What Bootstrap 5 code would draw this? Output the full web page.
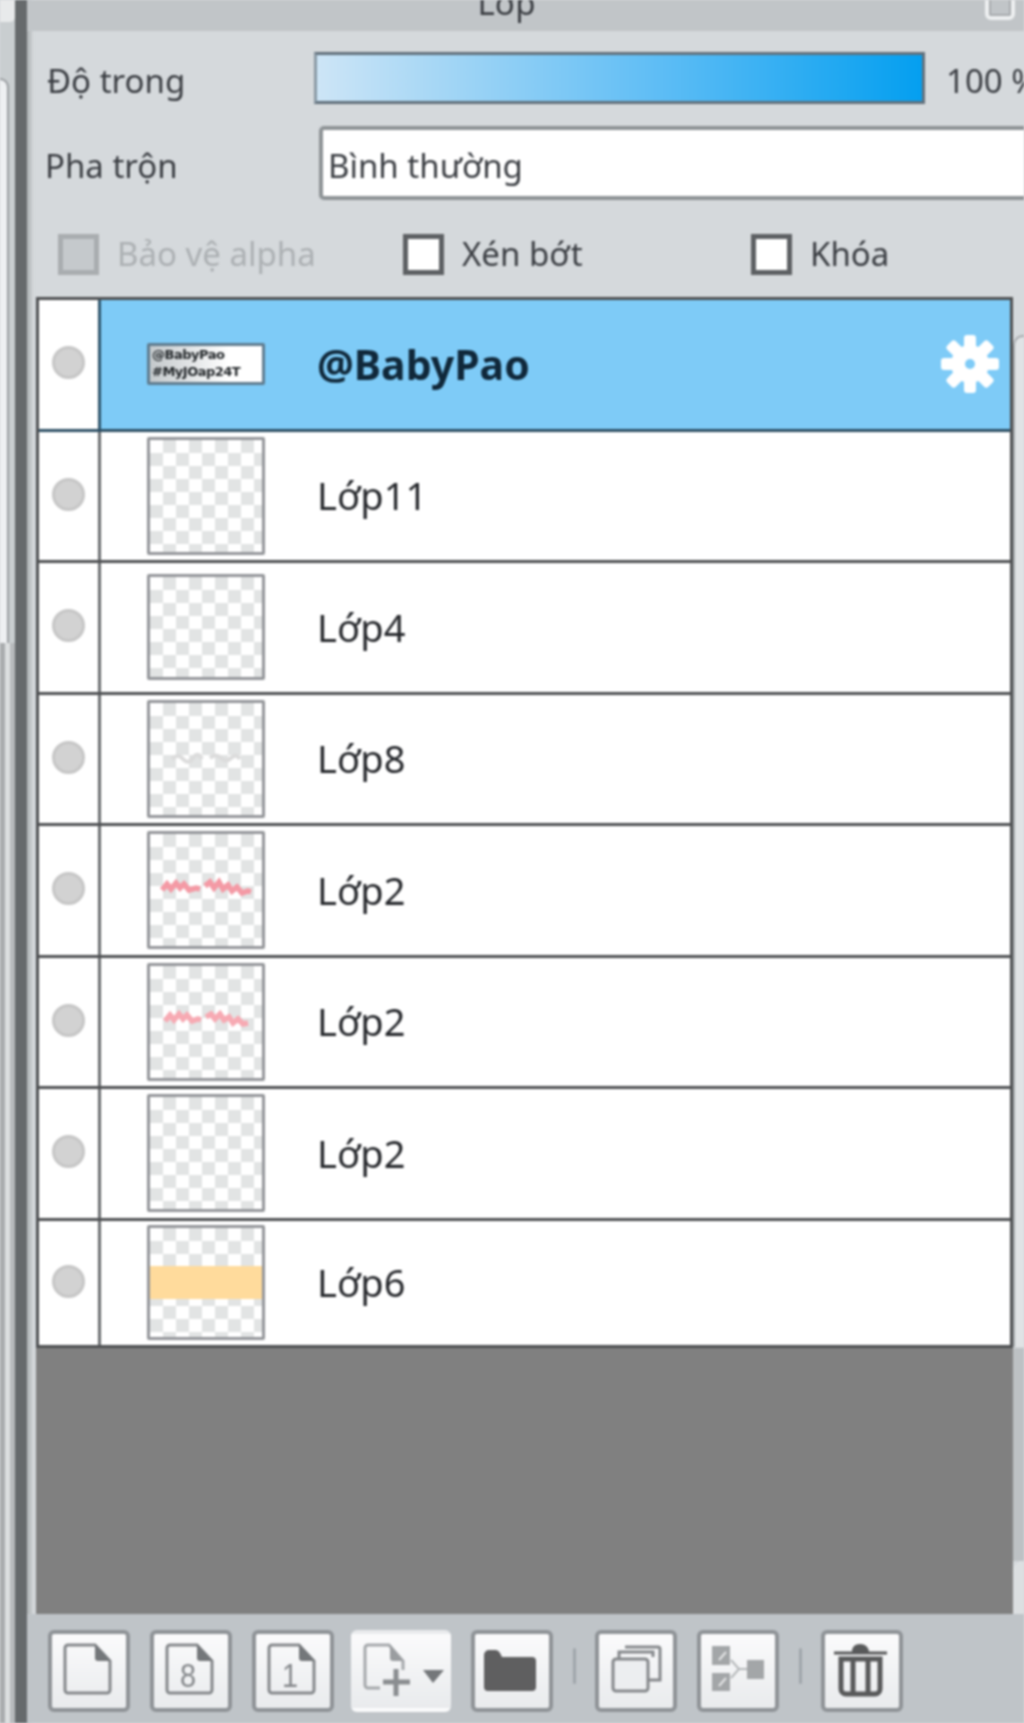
<!DOCTYPE html>
<html lang="vi">
<head>
    <meta charset="UTF-8">
    <meta name="viewport" content="width=device-width, initial-scale=1.0">
    <title>Lớp</title>
    <link rel="stylesheet" href="https://cdn.jsdelivr.net/npm/bootstrap@5.3.0/dist/css/bootstrap.min.css">
    <style>
        html, body { height: 1723px; overflow: hidden; }
        body { background: #d5d9dc; color: #3a3d42; font-family: "Noto Sans", sans-serif; font-size: 33px; }
        .app-frame { width: 1024px; height: 1723px; filter: blur(1px); }

        /* left rail */
        .rail { width: 15px; background: #c9ced0; }
        .rail-tab { height: 22px; background: #e8eaeb; border-bottom-right-radius: 5px; }
        .rail-panel { width: 9px; height: 565px; margin-top: 56px; background: #eef0f2; border-top: 2px solid #9a9ea1; border-right: 2px solid #9a9ea1; border-top-right-radius: 10px; }
        .rail-lower { background: repeating-linear-gradient(90deg, #a9acae 0 5px, #dcdfe0 5px 10px, #b7babc 10px 15px); }
        .split-bar { width: 12px; background: #666a6c; box-shadow: 4px 0 3px #b4b8ba; }

        /* panel header */
        .layer-panel { width: 997px; }
        .panel-title { height: 31px; background: #c1c5c8; line-height: 6px; padding-right: 38px; }
        .title-btn { position: absolute; right: 9px; top: -8px; width: 30px; height: 28px; border: 4px solid #eef0f1; outline: 2px solid #a7abae; outline-offset: -6px; border-radius: 6px; }

        .opacity-row { height: 52px; margin-top: 21px; padding-left: 20px; }
        .opacity-row label { width: 267px; padding-top: 5px; }
        .slider-track { width: 611px; height: 52px; border: 3px solid #62717c; border-left-color: #8a9aa5; background: linear-gradient(90deg, #cde5f6, #5bbcf5 58%, #049ff0); }
        .slider-val { margin-left: 21px; padding-top: 5px; }
        .blend-row { height: 74px; margin-top: 22px; padding-left: 18px; }
        .blend-row label { width: 274px; padding-top: 5px; }
        .blend-box { width: 720px; height: 74px; border: 4px solid #8e9396; border-radius: 5px; background: #fff; padding: 5px 0 0 5px; }
        .check-row { height: 42px; margin-top: 33px; margin-left: 31px; }
        .check-item { gap: 18px; }
        .check-item:nth-child(1) { width: 345px; }
        .check-item:nth-child(2) { width: 348px; }
        .check-box { width: 41px; height: 41px; border: 5px solid #5d6063; background: #fff; }
        .check-off { color: #acb0b3; }
        .check-off .check-box { background: #c5c9cc; border-color: #a9adb0; }

        /* layer list */
        .layer-list { width: 977px; margin-left: 9px; margin-top: 22px; border: 3px solid #4e5052; border-bottom: 0; background: #fff; }
        .layer-row { height: 131.5px; border-bottom: 3px solid #4e5052; }
        .layer-row:last-child { height: 127px; }
        .eye-cell { width: 62px; flex-shrink: 0; padding-bottom: 3px; border-right: 3px solid #6b6e70; }
        .eye-dot { width: 33px; height: 33px; border-radius: 50%; background: #d2d2d2; border: 3px solid #c6c6c6; }
        .layer-main { flex-grow: 1; min-width: 0; padding-left: 46px; }
        .layer-row.is-active .layer-main { background: #7ecbf7; }
        .layer-row.is-active .eye-cell { border-right-color: #2f566d; }
        .layer-row.is-active { border-bottom-color: #2d4f64; }
        .layer-thumb { width: 118px; height: 118px; flex-shrink: 0; border: 3px solid #94969a; border-radius: 2px; background: repeating-conic-gradient(#e2e4e4 0 25%, #fff 0 50%) 0 0 / 26px 26px; }
        .layer-row:nth-child(3) .layer-thumb { height: 106px; }
        .layer-row:last-child .layer-thumb { height: 115px; }
        .thumb-text { height: 42px; padding: 0 2px; background: linear-gradient(90deg, #c3c8cb, #fff 70%); font: 700 13px/17px "DejaVu Sans", sans-serif; letter-spacing: -.5px; color: #24282b; overflow: hidden; white-space: nowrap; border-color: #5f7c8f; }
        .layer-name { margin-left: 52px; font-size: 38px; color: #26282c; }
        .layer-row.is-active .layer-name { font-size: 41px; font-weight: 700; color: #10283a; }
        .gear-icon { margin-left: auto; margin-right: 11px; }
        .thumb-band { height: 33px; margin-top: 38px; background: #ffdb9c; }
        .empty-area { width: 977px; margin-left: 9px; height: 266px; background: #808080; }

        /* toolbar */
        .tool-bar { height: 112px; padding: 16px 0 0 21px; gap: 20px; background: #bfc4c8; }
        .tool-btn { width: 82px; height: 82px; padding: 0; border: 4px solid #8f9397; border-radius: 6px; background: linear-gradient(#fbfbfc, #e9ebed); }
        .tool-btn svg { display: block; margin: -4px; }
        .tool-off { width: 100px; margin-left: -3px; border-color: transparent; }
        .tool-sep { width: 3px; height: 36px; margin: 18px -1px 0 0; background: #a0a6ab; border-radius: 2px; }
        .side-slot { flex-grow: 1; }
        .side-curve { height: 1012px; margin-top: 60px; background: #e0e3e5; border-left: 2px solid #a5a9ac; border-top: 2px solid #a5a9ac; border-top-left-radius: 10px; }
        .side-lower { height: 213px; background: #bdc1c4; }
        .side-end { height: 53px; background: #dcdfe1; border-top-left-radius: 10px; }
    </style>
</head>
<body>
    <div class="app-frame d-flex">
        <div class="rail d-flex flex-column">
            <div class="rail-tab"></div>
            <div class="rail-panel"></div>
            <div class="rail-lower flex-grow-1"></div>
        </div>
        <div class="split-bar"></div>

        <div class="layer-panel overflow-hidden">
            <div class="panel-title position-relative text-center">Lớp<span class="title-btn"></span></div>

            <div class="opacity-row d-flex align-items-center text-nowrap">
                <label class="flex-shrink-0">Độ trong</label>
                <div class="slider-track flex-shrink-0"></div>
                <span class="slider-val">100 %</span>
            </div>
            <div class="blend-row d-flex align-items-center">
                <label class="flex-shrink-0">Pha trộn</label>
                <div class="blend-box d-flex align-items-center flex-shrink-0">Bình thường</div>
            </div>
            <div class="check-row d-flex">
                <div class="check-item check-off d-flex align-items-center"><span class="check-box"></span>Bảo vệ alpha</div>
                <div class="check-item d-flex align-items-center"><span class="check-box"></span>Xén bớt</div>
                <div class="check-item d-flex align-items-center"><span class="check-box"></span>Khóa</div>
            </div>

            <div class="d-flex">
                <div>
                    <div class="layer-list">
                        <div class="layer-row is-active d-flex">
                            <div class="eye-cell d-flex align-items-center justify-content-center"><span class="eye-dot"></span></div>
                            <div class="layer-main d-flex align-items-center">
                                <div class="layer-thumb thumb-text">@BabyPao<br>#MyJOap24T</div>
                                <span class="layer-name">@BabyPao</span>
                                <svg class="gear-icon" width="58" height="60" viewBox="0 0 58 60"><g fill="#fff"><circle cx="29" cy="30" r="19"/><rect x="23" y="1" width="12" height="58" rx="3"/><rect x="23" y="1" width="12" height="58" rx="3" transform="rotate(45 29 30)"/><rect x="23" y="1" width="12" height="58" rx="3" transform="rotate(90 29 30)"/><rect x="23" y="1" width="12" height="58" rx="3" transform="rotate(135 29 30)"/></g><circle cx="29" cy="30" r="5" fill="#7ecbf7"/></svg>
                            </div>
                        </div>
                        <div class="layer-row d-flex">
                            <div class="eye-cell d-flex align-items-center justify-content-center"><span class="eye-dot"></span></div>
                            <div class="layer-main d-flex align-items-center"><div class="layer-thumb"></div><span class="layer-name">Lớp11</span></div>
                        </div>
                        <div class="layer-row d-flex">
                            <div class="eye-cell d-flex align-items-center justify-content-center"><span class="eye-dot"></span></div>
                            <div class="layer-main d-flex align-items-center"><div class="layer-thumb"></div><span class="layer-name">Lớp4</span></div>
                        </div>
                        <div class="layer-row d-flex">
                            <div class="eye-cell d-flex align-items-center justify-content-center"><span class="eye-dot"></span></div>
                            <div class="layer-main d-flex align-items-center">
                                <div class="layer-thumb">
                                    <svg width="112" height="112" viewBox="0 0 112 112"><path d="M22 56q6-6 11 0t10-1 9 1M60 55q6-5 11 0t10 0 9 1" fill="none" stroke="#dcdcdc" stroke-width="4"/></svg>
                                </div>
                                <span class="layer-name">Lớp8</span>
                            </div>
                        </div>
                        <div class="layer-row d-flex">
                            <div class="eye-cell d-flex align-items-center justify-content-center"><span class="eye-dot"></span></div>
                            <div class="layer-main d-flex align-items-center">
                                <div class="layer-thumb">
                                    <svg width="112" height="112" viewBox="0 0 112 112"><path d="M12 56l5-6 4 5 5-6 4 5 4-4 5 6 7-2 4 1M55 52l5-4 4 6 5-6 4 7 5-4 4 6 5-4 5 6 6-2 3 1" fill="none" stroke="#f49aa5" stroke-width="5.5"/></svg>
                                </div>
                                <span class="layer-name">Lớp2</span>
                            </div>
                        </div>
                        <div class="layer-row d-flex">
                            <div class="eye-cell d-flex align-items-center justify-content-center"><span class="eye-dot"></span></div>
                            <div class="layer-main d-flex align-items-center">
                                <div class="layer-thumb">
                                    <svg width="112" height="112" viewBox="0 0 112 112"><path d="M15 55l5-6 4 5 5-6 4 5 4-4 5 6 6-2 3 1M56 51l5-3 4 5 5-5 4 6 5-3 4 6 5-4 5 5 5-1" fill="none" stroke="#f7aab3" stroke-width="5.5"/></svg>
                                </div>
                                <span class="layer-name">Lớp2</span>
                            </div>
                        </div>
                        <div class="layer-row d-flex">
                            <div class="eye-cell d-flex align-items-center justify-content-center"><span class="eye-dot"></span></div>
                            <div class="layer-main d-flex align-items-center"><div class="layer-thumb"></div><span class="layer-name">Lớp2</span></div>
                        </div>
                        <div class="layer-row d-flex">
                            <div class="eye-cell d-flex align-items-center justify-content-center"><span class="eye-dot"></span></div>
                            <div class="layer-main d-flex align-items-center"><div class="layer-thumb"><div class="thumb-band"></div></div><span class="layer-name">Lớp6</span></div>
                        </div>
                    </div>
                </div>
                <div class="side-slot overflow-hidden"><div class="side-curve"></div></div>
            </div>
            <div class="d-flex">
                <div class="empty-area flex-shrink-0"></div>
                <div class="side-slot overflow-hidden"><div class="side-lower"></div><div class="side-end"></div></div>
            </div>

            <div class="tool-bar d-flex">
                <button class="tool-btn" type="button">
                    <svg width="82" height="82" viewBox="0 0 82 82"><path d="M20 15H47L62 31V60a3 3 0 0 1-3 3H20a3 3 0 0 1-3-3V18a3 3 0 0 1 3-3z" fill="none" stroke="#85888b" stroke-width="3"/><path d="M47 14L63 31H50a3 3 0 0 1-3-3z" fill="#74777a"/></svg>
                </button>
                <button class="tool-btn" type="button">
                    <svg width="82" height="82" viewBox="0 0 82 82"><path d="M20 15H47L62 31V60a3 3 0 0 1-3 3H20a3 3 0 0 1-3-3V18a3 3 0 0 1 3-3z" fill="none" stroke="#85888b" stroke-width="3"/><path d="M47 14L63 31H50a3 3 0 0 1-3-3z" fill="#74777a"/><text transform="translate(38 57) scale(.85 1)" text-anchor="middle" font-family="Liberation Sans" font-size="34" fill="#85888b">8</text></svg>
                </button>
                <button class="tool-btn" type="button">
                    <svg width="82" height="82" viewBox="0 0 82 82"><path d="M20 15H47L62 31V60a3 3 0 0 1-3 3H20a3 3 0 0 1-3-3V18a3 3 0 0 1 3-3z" fill="none" stroke="#85888b" stroke-width="3"/><path d="M47 14L63 31H50a3 3 0 0 1-3-3z" fill="#74777a"/><text transform="translate(38 57) scale(.85 1)" text-anchor="middle" font-family="Liberation Sans" font-size="34" fill="#85888b">1</text></svg>
                </button>
                <button class="tool-btn tool-off" type="button">
                    <svg width="100" height="82" viewBox="0 0 100 82"><path d="M29 58H17a3 3 0 0 1-3-3V18a3 3 0 0 1 3-3H38L52 31V40" fill="none" stroke="#a5a8ab" stroke-width="3"/><path d="M39 15L52 31H42a3 3 0 0 1-3-3z" fill="#9a9da0"/><path d="M45 39V66M32 52H59" stroke="#8a8d90" stroke-width="5"/><path d="M72 40H93L82 53z" fill="#74777a"/></svg>
                </button>
                <button class="tool-btn" type="button">
                    <svg width="82" height="82" viewBox="0 0 82 82"><path d="M13 25a5 5 0 0 1 5-5h7a5 5 0 0 1 4 3l2 4H61a4 4 0 0 1 4 4V57a4 4 0 0 1-4 4H17a4 4 0 0 1-4-4z" fill="#5f5f60"/></svg>
                </button>
                <span class="tool-sep"></span>
                <button class="tool-btn" type="button">
                    <svg width="82" height="82" viewBox="0 0 82 82"><g fill="none" stroke="#85888b" stroke-width="3"><path d="M30 17H63a2 2 0 0 1 2 2V50H54"/><path d="M24 28V22h34v5"/><rect x="18" y="29" width="35" height="32" rx="3" fill="#eceef0"/></g></svg>
                </button>
                <button class="tool-btn" type="button">
                    <svg width="82" height="82" viewBox="0 0 82 82"><g fill="#a3a6a8"><rect x="15" y="16" width="18" height="19"/><rect x="15" y="43" width="18" height="18"/><rect x="50" y="30" width="17" height="19"/></g><path d="M22 30l7-8M22 56l7-8" stroke="#e5e6e7" stroke-width="2"/><path d="M34 30l8 9-8 9M42 39h8" fill="none" stroke="#b5b8ba" stroke-width="2"/></svg>
                </button>
                <span class="tool-sep"></span>
                <button class="tool-btn" type="button">
                    <svg width="82" height="82" viewBox="0 0 82 82"><path d="M13 23H66" stroke="#58595a" stroke-width="3"/><path d="M31 22q0-8 8-8t9 8z" fill="#58595a"/><path d="M20 29H59V59a5 5 0 0 1-5 5H25a5 5 0 0 1-5-5z" fill="none" stroke="#58595a" stroke-width="5"/><path d="M32 31V62M47 31V62" stroke="#58595a" stroke-width="5"/></svg>
                </button>
            </div>
        </div>
    </div>
    <script src="https://cdn.jsdelivr.net/npm/bootstrap@5.3.0/dist/js/bootstrap.bundle.min.js"></script>
</body>
</html>
